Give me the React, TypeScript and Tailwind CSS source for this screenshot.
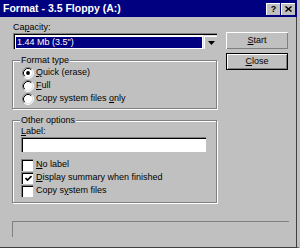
import type { ReactNode } from 'react'

const font = { fontFamily: '"Liberation Sans", Arial, sans-serif' }

function U({ children }: { children: ReactNode }) {
  return <span className="underline decoration-1 underline-offset-[1px]">{children}</span>
}

function Radio({ checked }: { checked?: boolean }) {
  return (
    <svg width="12" height="12" viewBox="0 0 12 12" className="shrink-0">
      <circle cx="6" cy="6" r="5" fill="#fff" />
      <path d="M2.11 9.89 A5.5 5.5 0 0 1 9.89 2.11" stroke="#808080" fill="none" />
      <path d="M9.89 2.11 A5.5 5.5 0 0 1 2.11 9.89" stroke="#fff" fill="none" />
      <path d="M2.82 9.18 A4.5 4.5 0 0 1 9.18 2.82" stroke="#000" fill="none" />
      <path d="M9.18 2.82 A4.5 4.5 0 0 1 2.82 9.18" stroke="#dfdfdf" fill="none" />
      {checked && <circle cx="6" cy="6" r="1.9" fill="#000" />}
    </svg>
  )
}

function Check({ checked }: { checked?: boolean }) {
  return (
    <div className="w-[12px] h-[12px] shrink-0 border-t border-l border-[#808080] border-r-white border-b-white">
      <div className="w-full h-full border-t border-l border-black border-r-[#dfdfdf] border-b-[#dfdfdf] bg-white flex items-center justify-center">
        {checked && (
          <svg width="7" height="7" viewBox="0 0 7 7">
            <path d="M0.5 3 L2.5 5 L6.5 1" stroke="#000" strokeWidth="1.6" fill="none" />
          </svg>
        )}
      </div>
    </div>
  )
}

function Button({ children, def }: { children: ReactNode; def?: boolean }) {
  return (
    <div className={`w-[62px] h-[17px] ${def ? 'border border-black' : ''}`}>
      <div className="w-full h-full border-t border-l border-white border-r-black border-b-black">
        <div className="w-full h-full border-r border-b border-[#808080] flex items-center justify-center text-[9px] text-black">
          {children}
        </div>
      </div>
    </div>
  )
}

function Group({ title, children, className }: { title: string; children: ReactNode; className?: string }) {
  return (
    <div className={`relative border border-[#808080] shadow-[inset_1px_1px_0_#fff,1px_1px_0_#fff] ${className ?? ''}`}>
      <span className="absolute -top-[6px] left-[7px] px-[1px] bg-[#c0c0c0] leading-[11px] text-[9px]">{title}</span>
      {children}
    </div>
  )
}

function CapBtn({ children }: { children: ReactNode }) {
  return (
    <div className="w-[14px] h-[12px] bg-[#c0c0c0] border-t border-l border-white border-r-black border-b-black flex items-center justify-center">
      {children}
    </div>
  )
}

export default function App() {
  return (
    <div style={font} className="w-[300px] h-[248px] bg-[#c0c0c0] flex flex-col text-black border-r-[3px] border-b border-r-[#c0c0c0] border-b-[#404040] overflow-hidden">
      <div className="h-[17px] bg-[#000080] flex items-center justify-between pl-[3px] pr-[2px]">
        <span className="text-white font-bold text-[10.5px] leading-none">Format - 3.5 Floppy (A:)</span>
        <div className="flex gap-[1px]">
          <CapBtn>
            <span className="font-bold text-[9px] leading-none">?</span>
          </CapBtn>
          <CapBtn>
            <svg width="7" height="6" viewBox="0 0 7 6">
              <path d="M0.5 0.5 L6.5 5.5 M6.5 0.5 L0.5 5.5" stroke="#000" strokeWidth="1.5" />
            </svg>
          </CapBtn>
        </div>
      </div>

      <div className="flex-1 flex flex-col pl-[12px] pt-[5px] border-r border-[#404040]">
        <div className="flex gap-[9px]">
          <div className="w-[205px] flex flex-col text-[9px]">
            <div className="leading-[11px] pl-[1px]">
              Ca<U>p</U>acity:
            </div>
            <div className="h-[16px] ml-[1px] border-t border-l border-[#808080] border-r-white border-b-white">
              <div className="h-full border-t border-l border-black border-r-[#dfdfdf] border-b-[#dfdfdf] bg-white flex items-center pl-[1px]">
                <div className="flex-1 h-[11px] bg-[#000080] text-white leading-[11px] pl-[1px]">1.44 Mb (3.5")</div>
                <div className="w-[14px] h-full ml-[1px] border-t border-l border-[#dfdfdf] border-r-black border-b-black">
                  <div className="w-full h-full bg-[#c0c0c0] border-t border-l border-white border-r-[#808080] border-b-[#808080] flex items-center justify-center">
                    <svg width="7" height="4" viewBox="0 0 7 4">
                      <path d="M0 0 H7 L3.5 4 Z" fill="#000" />
                    </svg>
                  </div>
                </div>
              </div>
            </div>

            <Group title="Format type" className="mt-[11px] pt-[5px] pb-[3px] pl-[9px]">
              <div className="flex items-center gap-[2px] h-[13px]">
                <Radio checked />
                <span><U>Q</U>uick (erase)</span>
              </div>
              <div className="flex items-center gap-[2px] h-[13px]">
                <Radio />
                <span><U>F</U>ull</span>
              </div>
              <div className="flex items-center gap-[2px] h-[13px]">
                <Radio />
                <span>Copy system files <U>o</U>nly</span>
              </div>
            </Group>

            <Group title="Other options" className="mt-[11px] pt-[5px] pb-[5px] pl-[8px] pr-[10px]">
              <div className="leading-[11px]">
                <U>L</U>abel:
              </div>
              <div className="h-[15px] border-t border-l border-[#808080] border-r-white border-b-white">
                <div className="h-full border-t border-l border-black border-r-[#dfdfdf] border-b-[#dfdfdf] bg-white" />
              </div>
              <div className="mt-[6px]">
                <div className="flex items-center gap-[3px] h-[13px]">
                  <Check />
                  <span><U>N</U>o label</span>
                </div>
                <div className="flex items-center gap-[3px] h-[13px]">
                  <Check checked />
                  <span><U>D</U>isplay summary when finished</span>
                </div>
                <div className="flex items-center gap-[3px] h-[13px]">
                  <Check />
                  <span>Copy s<U>y</U>stem files</span>
                </div>
              </div>
            </Group>
          </div>

          <div className="flex flex-col gap-[4px] pt-[10px]">
            <Button>
              <U>S</U>tart
            </Button>
            <Button def>
              <U>C</U>lose
            </Button>
          </div>
        </div>

        <div className="mt-[18px] w-[277px] h-[16px] border-t border-l border-[#808080] border-r-white border-b-white" />
      </div>
    </div>
  )
}
